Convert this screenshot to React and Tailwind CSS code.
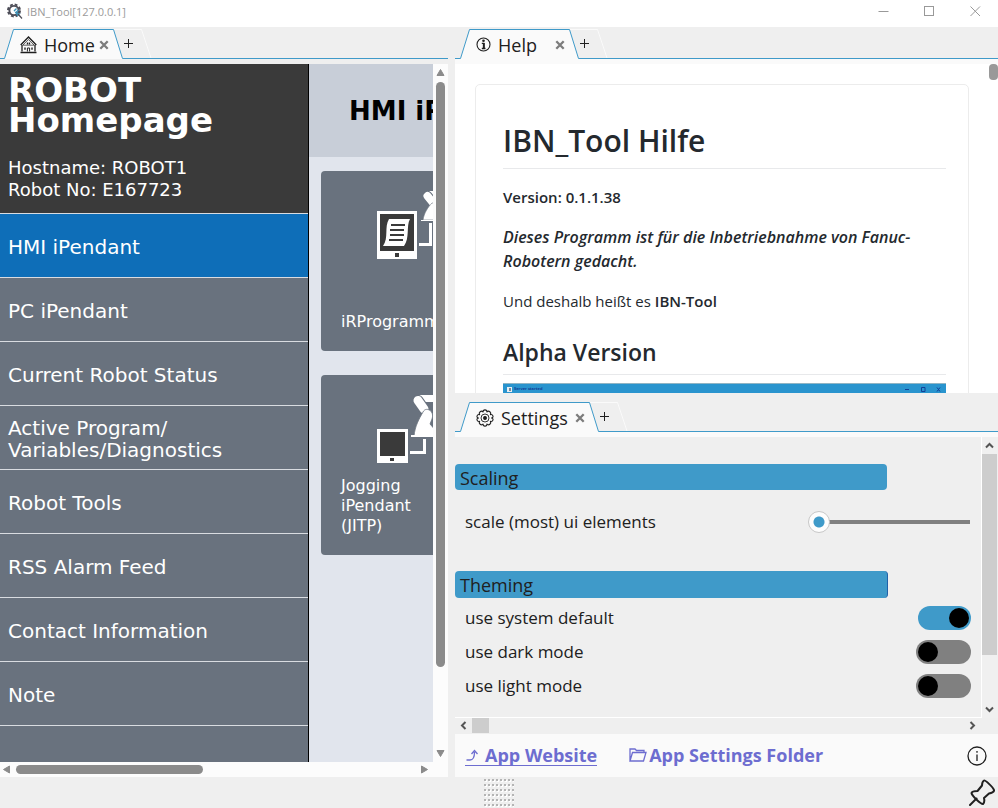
import React from "react";

const UI = "font-['Open_Sans','Noto_Sans',sans-serif]";
const WEB = "font-['DejaVu_Sans',sans-serif]";

const MENU = [
  { label: "HMI iPendant", active: true },
  { label: "PC iPendant" },
  { label: "Current Robot Status" },
  { label: "Active Program/ Variables/Diagnostics" },
  { label: "Robot Tools" },
  { label: "RSS Alarm Feed" },
  { label: "Contact Information" },
  { label: "Note" },
];

function AppIcon() {
  return (
    <svg width="17" height="17" viewBox="0 0 17 17" aria-hidden="true">
      <circle cx="7" cy="7.5" r="6" fill="none" stroke="#4d4d57" strokeWidth="2" strokeDasharray="2.8 1.91" />
      <circle cx="7" cy="7.5" r="4.6" fill="none" stroke="#4d4d57" strokeWidth="1.9" />
      <path d="M7 8 L9.5 5.5 M8.5 10 L11.5 7" stroke="#3e93b8" strokeWidth="1.4" />
      <path d="M7.5 8.5 L13.5 10.5 L10.5 13.5 Z" fill="#3e93b8" />
      <path d="M11 11 L15 15.500" stroke="#4d4d57" strokeWidth="1.2" />
    </svg>
  );
}

function HomeIcon() {
  return (
    <svg width="17" height="18" viewBox="0 0 17 18" fill="none" stroke="#1f1f1f" strokeWidth="1" aria-hidden="true">
      <path d="M.7 9 L8.5 1 L16.3 9" strokeWidth="1.4" />
      <path d="M2.8 9.2 L8.5 3.6 L14.2 9.2 Z" strokeWidth=".7" />
      <path d="M2 9 V15.5 M15 9 V15.5" strokeWidth="1.3" />
      <path d="M.5 16.5 H16.5" strokeWidth="1.5" />
      <path d="M7.4 15.5 V12 H9.6 V15.5" />
      <path d="M5 11.5 V13.800 M12 11.5 V13.800 M7.500 6.500 V8.500 M9.500 6.500 V8.500" strokeWidth="1.4" />
    </svg>
  );
}

function InfoBoldIcon() {
  return (
    <svg width="15" height="15" viewBox="0 0 15 15" aria-hidden="true">
      <circle cx="7.5" cy="7.5" r="6.500" fill="none" stroke="#1f1f1f" strokeWidth="1.1" />
      <circle cx="7.5" cy="3.800" r="1.3" fill="#1f1f1f" />
      <path d="M5.800 6.300 H7.800 V11.500 M5.800 11.500 H9.500" fill="none" stroke="#1f1f1f" strokeWidth="1.3" />
      <path d="M7.800 6 V11.500" stroke="#1f1f1f" strokeWidth="1.9" />
    </svg>
  );
}

function GearIcon() {
  return (
    <svg width="18" height="18" viewBox="0 0 18 18" fill="none" stroke="#1f1f1f" strokeWidth="1.100" aria-hidden="true">
      <path
        d="M7 3 C7 .2 11 .2 11 3 C12.800 1 15.700 3.500 14.400 5.600 C17 5 18.200 8.500 15.500 9 C18.200 9.500 17 13 14.400 12.400 C15.700 14.500 12.800 17 11 15 C11 17.800 7 17.800 7 15 C5.200 17 2.300 14.500 3.600 12.400 C1 13 -.2 9.500 2.500 9 C-.2 8.500 1 5 3.600 5.600 C2.300 3.500 5.200 1 7 3 Z"
        strokeLinejoin="round"
      />
      <circle cx="9" cy="9" r="4" strokeWidth=".9" />
      <circle cx="9" cy="9" r="1.400" fill="#1f1f1f" />
    </svg>
  );
}

function TabBar({ icon, label, leadClass, tabClass }) {
  return (
    <div className="flex h-8 shrink-0 items-end bg-[#efefef]" role="tablist">
      <div className={`h-px bg-[#3f9ac9] ${leadClass}`} />
      <svg className="shrink-0" width="10" height="30" viewBox="0 0 10 30" aria-hidden="true">
        <path d="M0 30 L10 0 V30 Z" fill="#fafafa" />
        <path d="M0 29.5 H.5 L9.5 .5 H10" fill="none" stroke="#3f9ac9" />
      </svg>
      <div className={`flex h-[30px] shrink-0 items-center border-t border-[#3f9ac9] bg-[#fafafa] pl-[6px] ${tabClass}`}>
        <button type="button" role="tab" aria-selected="true" className="flex items-center gap-[7px] text-[18px] leading-6 text-[#202020]">
          {icon}
          {label}
        </button>
        <button type="button" aria-label={`Close ${label}`} className="mr-1 ml-auto">
          <svg width="10" height="10" viewBox="0 0 10 10" aria-hidden="true">
            <path d="M1.3 1.3 L8.7 8.7 M8.7 1.3 L1.3 8.7" stroke="#7c7c7c" strokeWidth="2.3" />
          </svg>
        </button>
      </div>
      <svg className="shrink-0" width="10" height="30" viewBox="0 0 10 30" aria-hidden="true">
        <path d="M0 .5 H10" stroke="#fafafa" />
        <path d="M0 0 L10 30 H0 Z" fill="#fafafa" />
        <path d="M0 .5 H.5 L9.5 29.5 H10" fill="none" stroke="#3f9ac9" />
      </svg>
      <div className="flex h-[30px] flex-1 border-b border-[#3f9ac9]">
        <button type="button" aria-label="New tab">
          <svg width="29" height="29" viewBox="0 0 29 29" fill="none" aria-hidden="true">
            <path d="M0 .5 H18.5 L28 29" stroke="#fafafa" />
            <path d="M1 14.5 H10 M5.5 10 V19" stroke="#202020" />
          </svg>
        </button>
      </div>
    </div>
  );
}

function Arrow({ d }) {
  return (
    <svg width="9" height="9" viewBox="0 0 9 9" className="shrink-0" aria-hidden="true">
      <path d={d} fill="#8b8b8b" stroke="#8b8b8b" strokeLinejoin="round" />
    </svg>
  );
}

function Chevron({ d }) {
  return (
    <svg width="9" height="9" viewBox="0 0 9 9" className="shrink-0" aria-hidden="true">
      <path d={d} fill="none" stroke="#555" strokeWidth="2" />
    </svg>
  );
}

function ProgrammerIcon() {
  return (
    <svg width="90" height="72" viewBox="0 0 90 72" aria-hidden="true">
      <rect x="0" y="22" width="40" height="48" fill="#fff" />
      <rect x="3" y="25" width="34" height="37" fill="#3a3a3a" />
      <rect x="18" y="64" width="4" height="4" fill="#3a3a3a" />
      <path d="M12 30 H33 C29 37 33 49 27 57 H6 C12 49 7 38 12 30 Z" fill="#fff" />
      <path d="M14 36 H28 M13 41 H27 M13 46 H27 M12 51 H26" stroke="#3a3a3a" strokeWidth="2" />
      <g transform="translate(44 0)">
        <path d="M8 2 H40 V9 H13 Z" fill="#fff" />
        <path d="M6.500 7 L13 15" stroke="#69727e" strokeWidth="10" strokeLinecap="round" />
        <path d="M6.500 7 L13 15" stroke="#fff" strokeWidth="8" strokeLinecap="round" />
        <path d="M2 31 C3 24 7 18 11 14 H26 V31 Z" fill="#fff" stroke="#69727e" strokeWidth=".6" />
        <path d="M0 31.500 H26" stroke="#fff" />
      </g>
      <path d="M42 55.500 H53.500 V34" fill="none" stroke="#fff" strokeWidth="3" />
    </svg>
  );
}

function JoggingIcon() {
  return (
    <svg width="90" height="70" viewBox="0 0 90 70" aria-hidden="true">
      <rect x="0" y="35" width="31" height="34" fill="#fff" />
      <rect x="3" y="38" width="25" height="24" fill="#3a3a3a" />
      <rect x="13" y="64" width="4" height="3" fill="#3a3a3a" />
      <g transform="translate(34 0)">
        <path d="M8 1 H44 V8 H14 Z" fill="#fff" />
        <path d="M7 6.500 L13 15" stroke="#69727e" strokeWidth="11" strokeLinecap="round" />
        <path d="M7 6.500 L13 15" stroke="#fff" strokeWidth="9" strokeLinecap="round" />
        <path d="M3 42 C4 32 8 25 12 18 C15 12 24 17 21 25 L19 30 L26 38 V42 Z" fill="#fff" stroke="#69727e" strokeWidth=".8" />
        <path d="M0 42 H30" stroke="#fff" strokeWidth="2" />
      </g>
      <path d="M33 58.500 H47.500 V45" fill="none" stroke="#fff" strokeWidth="3" />
    </svg>
  );
}

function HomePane() {
  return (
    <section className="flex min-h-0 min-w-0 flex-col">
      <TabBar icon={<HomeIcon />} label="Home" leadClass="w-1" tabClass="w-[99px]" />
      <div className={`mt-[5px] flex min-h-0 flex-1 ${WEB}`}>
        <nav className="w-[309px] shrink-0 overflow-hidden border-r border-black bg-[#69727e] text-white">
          <header className="h-[150px] border-b border-[#d9dce1] bg-[#3a3a3a] px-2 pt-[11px]">
            <h1 className="text-[34px] leading-[30px] font-bold">
              ROBOT
              <br />
              Homepage
            </h1>
            <p className="mt-[22px] text-[18px] leading-[22px]">
              Hostname: ROBOT1
              <br />
              Robot No: E167723
            </p>
          </header>
          <ul>
            {MENU.map((m) => (
              <li key={m.label} className="border-b border-[#d9dce1]">
                <a href="#" className={`flex h-[63px] items-center px-2 pt-[2px] text-[20px] leading-[22px] ${m.active ? "bg-[#0e6eb8]" : ""}`}>
                  <span className="w-[230px]">{m.label}</span>
                </a>
              </li>
            ))}
          </ul>
        </nav>
        <div className="min-w-0 flex-1 overflow-hidden bg-[#e1e5ed]">
          <h2 className="flex h-[93px] items-center bg-[#c8ced8] pt-[2px] pl-10 text-[26px] font-bold whitespace-nowrap text-black">HMI iPendant</h2>
          <div className="flex flex-col gap-6 py-[14px] pl-3 text-[16px] leading-5 text-white">
            <a href="#" className="block h-[180px] w-[180px] rounded-[4px] bg-[#69727e] pt-[18px]">
              <span className="block pl-14"><ProgrammerIcon /></span>
              <span className="block pt-[51px] pl-5">iRProgrammer</span>
            </a>
            <a href="#" className="block h-[180px] w-[180px] rounded-[4px] bg-[#69727e] pt-[19px]">
              <span className="block pl-14"><JoggingIcon /></span>
              <span className="block pt-3 pl-5">
                Jogging
                <br />
                iPendant
                <br />
                (JITP)
              </span>
            </a>
          </div>
        </div>
        <div className="flex w-[15px] shrink-0 flex-col items-center bg-[#fcfcfc] py-1">
          <Arrow d="M4.500 1.500 L8 7.500 H1 Z" />
          <div className="mt-[5px] w-[9px] flex-[585] rounded-full bg-[#8b8b8b]" />
          <div className="flex-[82]" />
          <Arrow d="M4.500 7.500 L8 1.500 H1 Z" />
        </div>
      </div>
      <div className="flex h-[15px] shrink-0 items-center bg-[#fcfcfc] pr-[19px] pl-[2px]">
        <Arrow d="M1.500 4.500 L7.500 1 V8 Z" />
        <div className="ml-[5px] h-[9px] flex-[187] rounded-full bg-[#8b8b8b]" />
        <div className="flex-[217]" />
        <Arrow d="M7.500 4.500 L1.500 1 V8 Z" />
      </div>
    </section>
  );
}

function HelpPane() {
  return (
    <section className="flex h-[366px] shrink-0 flex-col">
      <TabBar icon={<InfoBoldIcon />} label="Help" leadClass="w-[5px]" tabClass="w-[99px]" />
      <div className="h-[5px] shrink-0 bg-[#fafafa]" />
      <div className="flex min-h-0 flex-1 bg-white">
        <div className="min-w-0 flex-1 overflow-hidden pt-5 pr-5 pl-5">
          <article className="h-[600px] rounded-[5px] border border-[#ececec] pt-9 pr-[22px] pl-[27px] text-[15px] leading-6 text-[#24292e]">
            <h1 className="mb-4 border-b border-[#e8e9eb] pb-[7px] text-[30px] leading-10 font-semibold">IBN_Tool Hilfe</h1>
            <p className="mb-4 font-semibold">Version: 0.1.1.38</p>
            <p className="mb-4 text-[16px] font-semibold italic">
              Dieses Programm ist für die Inbetriebnahme von Fanuc-Robotern gedacht.
            </p>
            <p className="mb-6">
              Und deshalb heißt es <strong className="font-semibold">IBN-Tool</strong>
            </p>
            <h2 className="mb-2 border-b border-[#e8e9eb] pb-[7px] text-[23px] leading-[30px] font-semibold">Alpha Version</h2>
            <figure className="flex h-10 items-start border-t border-[#8fb4c4] bg-[#2994ce] px-1 pt-[2px] text-[#123f96]">
              <svg width="5" height="5" viewBox="0 0 5 5" className="mt-px" aria-hidden="true">
                <rect width="5" height="5" fill="#e8eef2" />
                <rect x="2" y="1" width="2" height="3" fill="#789" />
              </svg>
              <figcaption className="ml-[2px] text-[4px] leading-[6px] font-bold">Server started</figcaption>
              <svg width="36" height="5" viewBox="0 0 36 5" fill="none" stroke="#123f96" className="mt-px mr-[1px] ml-auto" aria-hidden="true">
                <path d="M0 2.500 H4 M16.500 .5 H20 V4.500 H16.500 Z M32 .5 L35 4.500 M35 .5 L32 4.500" />
              </svg>
            </figure>
          </article>
        </div>
        <div className="w-[9px] shrink-0">
          <div className="h-4 rounded-[4px] bg-[#999]" />
        </div>
      </div>
    </section>
  );
}

function Toggle({ id, label, on }) {
  return (
    <div className="flex h-[34px] items-center justify-between pr-[10px] pl-[10px]">
      <label htmlFor={id}>{label}</label>
      <input
        id={id}
        type="checkbox"
        defaultChecked={on}
        className="flex h-6 w-[55px] appearance-none items-center rounded-full bg-[#808080] px-[2px] before:size-5 before:rounded-full before:bg-black before:content-[''] checked:w-[53px] checked:justify-end checked:bg-[#3f9ac9]"
      />
    </div>
  );
}

function SettingsPane() {
  return (
    <section className="mt-[7px] flex min-h-0 flex-1 flex-col">
      <TabBar icon={<GearIcon />} label="Settings" leadClass="w-[5px]" tabClass="w-[119px]" />
      <div className="h-[5px] shrink-0 bg-[#fafafa]" />
      <div className="flex min-h-0 flex-1">
        <div className="min-w-0 flex-1 overflow-hidden border-r border-b border-white pt-[27px] text-[17px] leading-6 text-[#202020]">
          <h3 className="h-[26px] w-[432px] max-w-full rounded-[4px] bg-[#3f9ac9] pt-[2px] pl-[5px] text-[18px]">Scaling</h3>
          <div className="mt-[15px] flex h-[34px] items-center justify-between pr-[11px] pl-[10px]">
            <label htmlFor="scale">scale (most) ui elements</label>
            <input
              id="scale"
              type="range"
              defaultValue="0"
              className="h-[22px] w-[162px] appearance-none bg-[linear-gradient(#808080,#808080)] bg-[length:150px_4px] bg-right bg-no-repeat [&::-webkit-slider-thumb]:size-[22px] [&::-webkit-slider-thumb]:appearance-none [&::-webkit-slider-thumb]:rounded-full [&::-webkit-slider-thumb]:border [&::-webkit-slider-thumb]:border-[#c8c8c8] [&::-webkit-slider-thumb]:bg-[radial-gradient(circle,#3f9ac9_5px,#fdfdfd_6px)]"
            />
          </div>
          <h3 className="mt-8 mb-[3px] h-[27px] w-[433px] max-w-full rounded-[4px] border-r border-[#2161a8] bg-[#3f9ac9] pt-[2px] pl-[5px] text-[18px]">Theming</h3>
          <Toggle id="sys" label="use system default" on />
          <Toggle id="dark" label="use dark mode" />
          <Toggle id="light" label="use light mode" />
        </div>
        <div className="flex w-4 shrink-0 flex-col items-center bg-[#f0f0f0] pt-1 pr-px pb-1">
          <Chevron d="M1 6.500 L4.500 3 L8 6.500" />
          <div className="mt-1 w-[15px] flex-[201] bg-[#cdcdcd]" />
          <div className="flex-[50]" />
          <Chevron d="M1 2.500 L4.500 6 L8 2.500" />
        </div>
      </div>
      <div className="flex h-4 shrink-0 items-center pr-[21px] pb-px pl-1">
        <Chevron d="M6.500 1 L3 4.500 L6.500 8" />
        <div className="ml-1 h-[15px] w-[17px] bg-[#cdcdcd]" />
        <span className="ml-auto"><Chevron d="M2.500 1 L6 4.500 L2.500 8" /></span>
      </div>
      <div className="flex h-[43px] shrink-0 items-center bg-[#fafafa] pr-[11px] pl-[10px] text-[18px] leading-5 font-bold text-[#6d6dd0]">
        <a href="#" className="flex items-center gap-[6px] border-b border-[#6d6dd0]">
          <svg width="14" height="14" viewBox="0 0 14 14" fill="none" stroke="#6d6dd0" strokeWidth="1.300" aria-hidden="true">
            <path d="M1.500 12 H5 C8 12 9.500 10 9.500 4 M6.500 6 L9.500 2.500 L12.500 6" />
          </svg>
          App Website
        </a>
        <a href="#" className="ml-8 flex items-center gap-[2px] border-b border-transparent">
          <svg width="18" height="16" viewBox="0 0 18 16" fill="none" stroke="#6d6dd0" strokeWidth="1.300" aria-hidden="true">
            <path d="M1 14 V2 H6 L7.500 3.500 H15 V5.500 M1 14 L3.500 5.500 H17 L14.500 14 Z" />
          </svg>
          App Settings Folder
        </a>
        <button type="button" aria-label="Information" className="ml-auto">
          <svg width="20" height="20" viewBox="0 0 20 20" fill="none" stroke="#202020" strokeWidth="1.300" aria-hidden="true">
            <circle cx="10" cy="10" r="9" />
            <path d="M10 8.500 V15 M10 5 V6.700" />
          </svg>
        </button>
      </div>
    </section>
  );
}

const GRIP = [0, 1, 2, 3, 4, 5].flatMap((r) => [0, 1, 2, 3, 4, 5, 6, 7].map((c) => [c * 4, r * 5]));

export default function App() {
  return (
    <div className={`flex h-screen flex-col overflow-hidden bg-[#efefef] ${UI}`}>
      <header className="flex h-[27px] shrink-0 items-center bg-white pl-[7px] text-[#9b9b9b]">
        <div className="flex items-center gap-[3px] pb-1 text-[11px] leading-4">
          <AppIcon />
          <span>IBN_Tool[127.0.0.1]</span>
        </div>
        <div className="ml-auto flex pb-1">
          <button type="button" aria-label="Minimize" className="flex w-[46px] justify-center">
            <svg width="11" height="11" viewBox="0 0 11 11" aria-hidden="true"><path d="M.5 5.500 H10.500" stroke="#999" /></svg>
          </button>
          <button type="button" aria-label="Maximize" className="flex w-[46px] justify-center">
            <svg width="11" height="11" viewBox="0 0 11 11" aria-hidden="true"><rect x=".5" y=".5" width="9" height="9" fill="none" stroke="#999" /></svg>
          </button>
          <button type="button" aria-label="Close" className="flex w-[46px] justify-center">
            <svg width="11" height="11" viewBox="0 0 11 11" aria-hidden="true"><path d="M.5 .5 L10 10 M10 .5 L.5 10" stroke="#999" /></svg>
          </button>
        </div>
      </header>
      <main className="grid min-h-0 flex-1 grid-cols-[448fr_543fr] grid-rows-1 gap-[7px]">
        <HomePane />
        <div className="flex min-h-0 min-w-0 flex-col">
          <HelpPane />
          <SettingsPane />
        </div>
      </main>
      <footer className="flex h-[31px] shrink-0 items-center justify-between pr-[3px]">
        <span className="w-7" />
        <svg width="30" height="28" viewBox="0 0 30 28" aria-hidden="true">
          {GRIP.map(([x, y]) => (
            <g key={`${x}-${y}`}>
              <rect x={x + 1} y={y + 1} width="2" height="2" fill="#fff" />
              <rect x={x} y={y} width="2" height="2" fill="#b4b4b4" />
            </g>
          ))}
        </svg>
        <button type="button" aria-label="Pin window">
          <svg width="26" height="27" viewBox="0 0 26 27" fill="none" stroke="#202020" strokeWidth="2" strokeLinejoin="round" strokeLinecap="round" aria-hidden="true">
            <path d="M15 1.500 C16 .8 24 8 25 11 C25.500 13 22 14 20 14.500 L15 19 C15.500 21 15 24 14 25 C12 25.500 3 17 2.500 14 C3 12.500 6 12 8.500 12 L13 6.500 C13 4 13.500 2.500 15 1.500 Z" />
            <path d="M7.500 19.500 L1 26" />
          </svg>
        </button>
      </footer>
    </div>
  );
}
